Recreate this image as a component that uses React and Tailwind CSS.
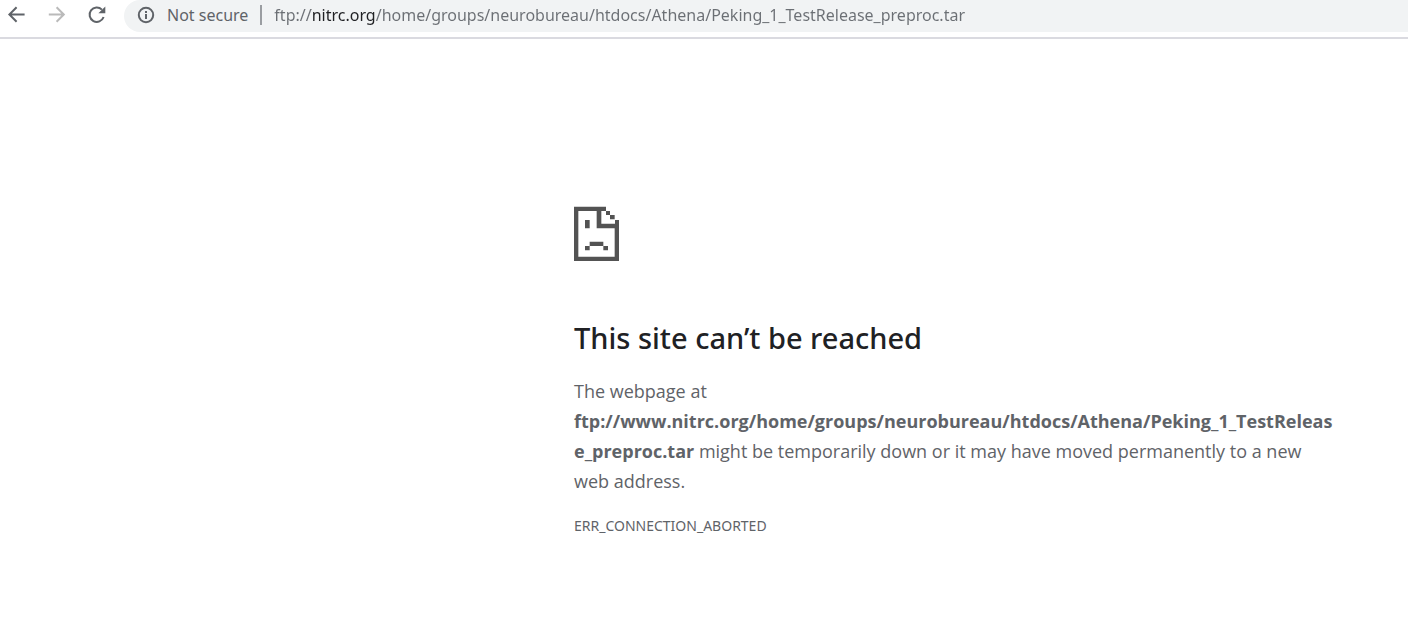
import React, { useState } from 'react';

const ADDRESS = 'ftp://nitrc.org/home/groups/neurobureau/htdocs/Athena/Peking_1_TestRelease_preproc.tar';

const BackIcon = () => (
    <svg viewBox="0 0 20 20" className="w-5 h-5" fill="none" stroke="currentColor" strokeWidth="2" aria-hidden="true">
        <path d="M17.6 9.5H3M9.6 2.2L2.4 9.5L9.6 16.8" />
    </svg>
);

const ForwardIcon = () => (
    <svg viewBox="0 0 20 20" className="w-5 h-5" fill="none" stroke="currentColor" strokeWidth="2" aria-hidden="true">
        <path d="M1.8 9.5H16.4M9.6 2.2L16.8 9.5L9.6 16.8" />
    </svg>
);

const ReloadIcon = () => (
    <svg viewBox="0 0 20 20" className="w-5 h-5" aria-hidden="true">
        <path d="M16.6 12A7.2 7.2 0 1 1 14.9 4.6" fill="none" stroke="currentColor" strokeWidth="2" />
        <path d="M18.3 1.6V8.2H11.4Z" fill="currentColor" />
    </svg>
);

const InfoIcon = () => (
    <svg viewBox="0 0 18 18" className="w-[18px] h-[18px] shrink-0" fill="none" stroke="currentColor" strokeWidth="2" aria-hidden="true">
        <circle cx="9" cy="9" r="7.2" />
        <path d="M9 8V13M9 5V7" />
    </svg>
);

// Pixel-art page with a folded corner and a frown
const SadPage = () => (
    <svg viewBox="0 0 135 165" className="w-[45px] h-[55px]" fill="#535353" aria-hidden="true">
        <path fillRule="evenodd" d="M0 2H96V15H82V53H123V42H135V165H0ZM13 15V152H122V67H68V15Z" />
        <path d="M96 15H108V27H96ZM108 27H122V40H108Z" />
        <path d="M33 42H47V67H33ZM47 107H88V120H47ZM33 120H47V133H33ZM88 120H102V133H88Z" />
    </svg>
);

const App = () => {
    const [address, setAddress] = useState(ADDRESS);

    return (
        <div className="min-h-screen bg-white font-['Noto_Sans','Open_Sans',sans-serif] text-[#5f6368]">
            <header className="flex items-start h-[39px] border-b-2 border-[#dadae0]">
                <nav className="flex items-center gap-5 h-[30px] pl-[7px]">
                    <button type="button" aria-label="Back"><BackIcon /></button>
                    <button type="button" aria-label="Forward" disabled className="text-[#bababa]"><ForwardIcon /></button>
                    <button type="button" aria-label="Reload"><ReloadIcon /></button>
                </nav>
                <div className="flex-1 min-w-0 h-8 ml-[17px] pl-[13px] pb-[2px] flex items-center rounded-l-full bg-[#f1f3f4] text-base">
                    <InfoIcon />
                    <label htmlFor="address" className="ml-3 whitespace-nowrap">Not secure</label>
                    <span className="w-[2px] h-5 mx-3 shrink-0 bg-[#9a9da1]" />
                    {/* The host part of the address is darker than the rest */}
                    <input
                        id="address"
                        type="text"
                        spellCheck="false"
                        value={address}
                        onChange={(e) => setAddress(e.target.value)}
                        className="flex-1 min-w-0 h-7 outline-none text-transparent caret-black bg-clip-text bg-[linear-gradient(to_right,#6b6f74_37px,#202124_37px,#202124_101px,#6b6f74_101px)]"
                    />
                </div>
            </header>

            <main className="ml-[574px] mr-4 max-w-[760px] pt-[167px]">
                <SadPage />
                <h1 className="mt-[57px] text-[29px] leading-10 font-medium text-[#202124]">This site can’t be reached</h1>
                <p className="mt-[18px] font-['Open_Sans','Noto_Sans',sans-serif] text-[18px] leading-[30px] wrap-break-word">
                    The webpage at <strong className="font-bold">ftp://www.nitrc.org/home/groups/neurobureau/htdocs/Athena/Peking_1_TestRelease_preproc.tar</strong> might be temporarily down or it may have moved permanently to a new web address.
                </p>
                <p className="mt-[15px] text-[14px] leading-[30px]">ERR_CONNECTION_ABORTED</p>
            </main>
        </div>
    );
};

export default App;
